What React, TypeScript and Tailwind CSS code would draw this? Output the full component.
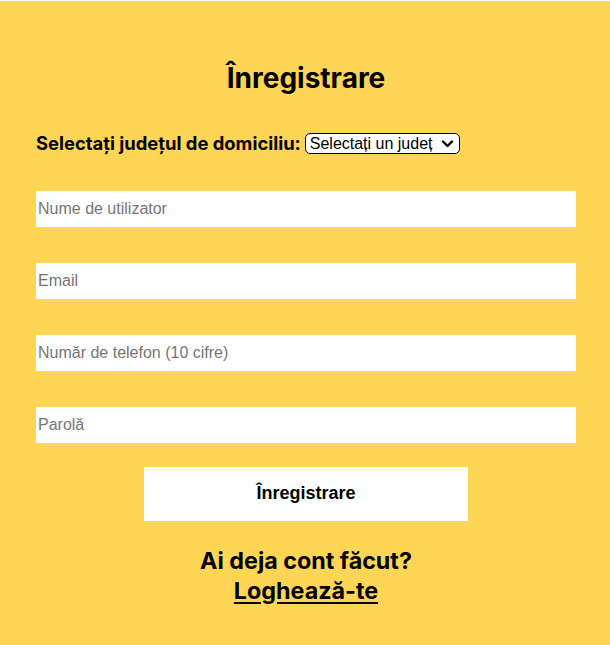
import React from "react";

const fields = ["Nume de utilizator", "Email", "Număr de telefon (10 cifre)", "Parolă"];

export default function App() {
    return (
        <div className="min-h-[645px] w-full bg-white pt-px">
            <div className="min-h-[644px] w-full bg-[#ffd555] flex flex-col items-center pl-[2px]">
                <h1 className="mt-[58px] text-[28px] leading-[38px] font-bold text-black font-['Inter',sans-serif]">
                    Înregistrare
                </h1>

                <div className="w-[540px] mt-[33px] flex items-center">
                    <label className="text-[18.4px] font-bold text-black font-['Inter',sans-serif] mr-[4px]">
                        Selectați județul de domiciliu:
                    </label>
                    <div className="h-[21px] w-[155px] border border-black rounded-[5px] bg-white flex items-center pl-[4px] pr-[5px] font-['Liberation_Sans',sans-serif] text-[16px] leading-none text-black">
                        <span>Selectați un județ</span>
                        <svg className="ml-auto" width="13" height="12" viewBox="0 0 13 12">
                            <path d="M2 3.5l4.5 4.5 4.5-4.5" stroke="black" strokeWidth="2.4" fill="none" strokeLinecap="round" strokeLinejoin="round" />
                        </svg>
                    </div>
                </div>

                <div className="w-[540px] mt-[33px] flex flex-col gap-[36px]">
                    {fields.map((placeholder, index) => (
                        <input
                            key={index}
                            placeholder={placeholder}
                            className="h-[36px] w-full bg-white px-[2px] text-[16px] font-['Liberation_Sans',sans-serif] text-black placeholder:text-[#757575] outline-none"
                        />
                    ))}
                </div>

                <button className="mt-[24px] h-[54px] w-[324px] bg-white text-[18px] font-bold text-black font-['Liberation_Sans',sans-serif]">
                    Înregistrare
                </button>

                <div className="mt-[25px] flex flex-col items-center text-[23.3px] leading-[30px] font-bold text-black font-['Inter',sans-serif]">
                    <span>Ai deja cont făcut?</span>
                    <a className="underline underline-offset-[3px] decoration-2 cursor-pointer">Loghează-te</a>
                </div>
            </div>
        </div>
    );
}
